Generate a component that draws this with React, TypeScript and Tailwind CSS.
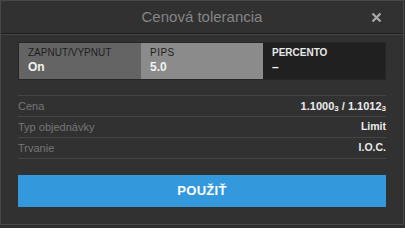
import React from 'react';

const rows = [
  { label: 'Cena', value: 'price' },
  { label: 'Typ objednávky', value: 'Limit' },
  { label: 'Trvanie', value: 'I.O.C.' },
];

function Price({ main, sub }: { main: string; sub: string }) {
  return (
    <span>
      {main}
      <span className="text-[8px] align-[-1px]">{sub}</span>
    </span>
  );
}

export default function App() {
  return (
    <div className="w-[405px] h-[228px] bg-[#2e2e2e]">
      <div
        className="w-[404px] h-[225px] bg-[#313131] border border-[#484848] flex flex-col"
        style={{ fontFamily: '"Liberation Sans", Arial, sans-serif' }}
      >
        {/* header */}
        <div className="relative h-[32px] flex items-center justify-center">
          <span className="text-[15px] text-[#858585]">Cenová tolerancia</span>
          <button className="absolute right-[21px] top-[11px] w-[11px] h-[11px]">
            <svg viewBox="0 0 11 11" className="w-[11px] h-[11px]">
              <path d="M1.5 1.5 L9.5 9.5 M9.5 1.5 L1.5 9.5" stroke="#a9a9a9" strokeWidth="2.2" />
            </svg>
          </button>
        </div>
        <div className="h-px bg-[#1d1d1d]" />
        <div className="h-px bg-[#474747]" />

        <div className="px-[17px] pt-[7px] flex flex-col">
          {/* tabs */}
          <div className="grid grid-cols-3 h-[38px] border border-[#262626]">
            <div className="bg-[#646464] pl-[9px] pt-[4px] flex flex-col">
              <span className="text-[10px] leading-[12px] text-[#1e1e1e]">ZAPNUT/VYPNUT</span>
              <span className="text-[12px] leading-[16px] font-bold text-[#f2f2f2]">On</span>
            </div>
            <div className="bg-[#8b8b8b] pl-[9px] pt-[4px] flex flex-col">
              <span className="text-[10px] leading-[12px] text-[#1e1e1e] tracking-[0.5px]">PIPS</span>
              <span className="text-[12px] leading-[16px] font-bold text-[#f2f2f2]">5.0</span>
            </div>
            <div className="bg-[#202020] pl-[9px] pt-[4px] flex flex-col">
              <span className="text-[10px] leading-[12px] font-bold text-[#e8e8e8]">PERCENTO</span>
              <span className="text-[12px] leading-[16px] font-bold text-[#f2f2f2]">–</span>
            </div>
          </div>

          {/* details */}
          <div className="mt-[15px] border-t border-[#444444]">
            {rows.map((r) => (
              <div
                key={r.label}
                className="h-[21px] flex items-center justify-between border-b border-[#444444]"
              >
                <span className="text-[11px] text-[#767676]">{r.label}</span>
                {r.value === 'price' ? (
                  <span className="text-[11px] font-bold text-[#ececec]">
                    <Price main="1.1000" sub="3" /> / <Price main="1.1012" sub="3" />
                  </span>
                ) : (
                  <span className="text-[10.5px] font-bold text-[#ececec]">{r.value}</span>
                )}
              </div>
            ))}
          </div>

          <button className="mt-[16px] h-[32px] bg-[#3499dc] text-white text-[13px] font-bold tracking-[0.3px]">
            POUŽIŤ
          </button>
        </div>
      </div>
    </div>
  );
}
